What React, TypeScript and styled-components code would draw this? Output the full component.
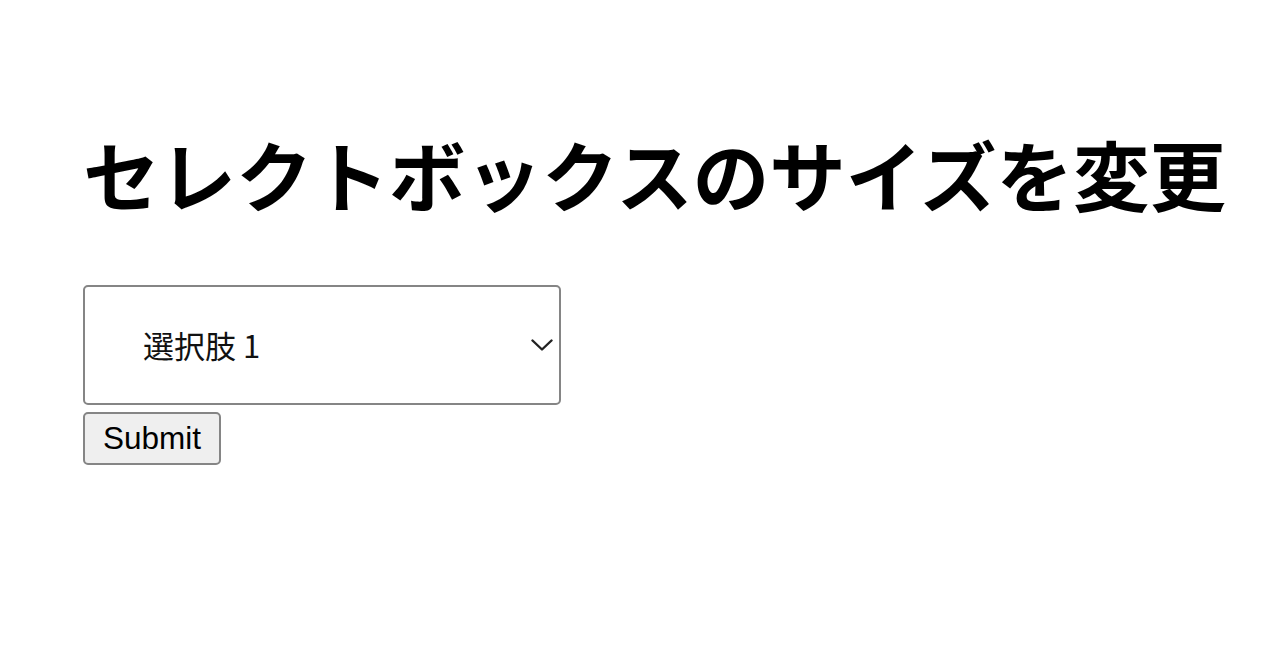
import { useState } from "react";
import styled, { createGlobalStyle } from "styled-components";

const GlobalStyle = createGlobalStyle`
  body {
    margin: 0;
    background: #fff;
    font-family: "Noto Sans CJK JP", "Noto Sans", sans-serif;
  }
`;

function App() {
  const [choice, setChoice] = useState("1");

  return (
    <Page>
      <GlobalStyle />
      <Title>セレクトボックスのサイズを変更</Title>
      <Form onSubmit={(e) => e.preventDefault()}>
        <SelectWrap>
          <Select value={choice} onChange={(e) => setChoice(e.target.value)}>
            <option value="1">選択肢 1</option>
            <option value="2">選択肢 2</option>
            <option value="3">選択肢 3</option>
          </Select>
          <Chevron width="22" height="12" viewBox="0 0 22 12">
            <polyline points="1.5,1.5 11,10.5 20.5,1.5" />
          </Chevron>
        </SelectWrap>
        <Button type="submit">Submit</Button>
      </Form>
    </Page>
  );
}

const Page = styled.div`
  padding: 135px 0 0 83px;
`;

const Title = styled.h1`
  margin: 0;
  font-size: 76.5px;
  line-height: 1;
  font-weight: 700;
  color: #000;
  white-space: nowrap;
`;

const Form = styled.form`
  margin-top: 73px;
  display: flex;
  flex-direction: column;
  align-items: flex-start;
  gap: 7px;
`;

const SelectWrap = styled.div`
  position: relative;
  width: 478px;
  height: 120px;
`;

const Select = styled.select`
  appearance: none;
  -webkit-appearance: none;
  box-sizing: border-box;
  width: 100%;
  height: 100%;
  padding: 0 50px 0 58px;
  border: 2px solid #858585;
  border-radius: 5px;
  background: #fff;
  font-family: "Noto Sans CJK JP", "Noto Sans", sans-serif;
  font-size: 31px;
  color: #111;
  outline: none;
`;

const Chevron = styled.svg`
  position: absolute;
  right: 8px;
  top: 50%;
  margin-top: -6px;
  pointer-events: none;
  fill: none;
  stroke: #222;
  stroke-width: 2.4;
  stroke-linecap: round;
  stroke-linejoin: round;
`;

const Button = styled.button`
  box-sizing: border-box;
  height: 53px;
  padding: 0 18px;
  border: 2px solid #858585;
  border-radius: 5px;
  background: #efefef;
  font-family: "Liberation Sans", Arial, sans-serif;
  font-size: 31.5px;
  color: #000;
`;

export default App;
